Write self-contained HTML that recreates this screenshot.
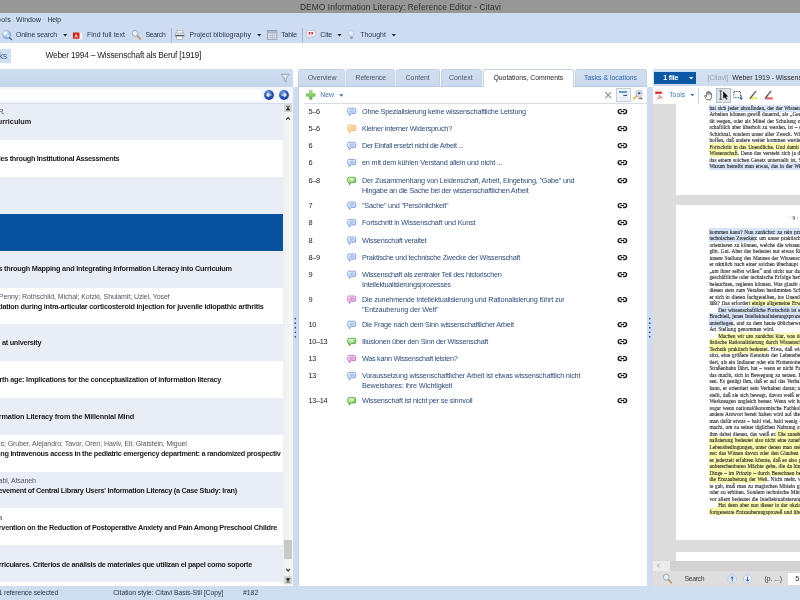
<!DOCTYPE html>
<html lang="en"><head><meta charset="utf-8">
<title>DEMO Information Literacy: Reference Editor - Citavi</title>
<style>
html,body{margin:0;padding:0;}
body{width:800px;height:600px;overflow:hidden;background:#fff;position:relative;font-family:"Liberation Sans",sans-serif;}
#app{position:absolute;left:0;top:0;width:800px;height:600px;overflow:hidden;will-change:transform;}
#app div,#app svg{position:absolute;box-sizing:border-box;}
.t{position:absolute;white-space:nowrap;line-height:1;transform:translateY(-50%);}
.f-s{font-family:"Liberation Sans",sans-serif;}
.f-r{font-family:"Liberation Serif",serif;}
.pd{-webkit-text-stroke:0.1px #262626;}
</style></head><body><div id="app">
<div style="left:0px;top:0px;width:800px;height:13.1px;background:#979797;"></div>
<span id="t0" class="t f-s" style="left:300px;top:6.6px;font-size:8.3px;color:#2f2f2f;letter-spacing:0.114px;">DEMO Information Literacy: Reference Editor - Citavi</span>
<div style="left:0px;top:13.1px;width:800px;height:30.3px;background:#cedcf1;"></div>
<span id="t1" class="t f-s" style="left:-3px;top:20.3px;font-size:6.9px;color:#1f2a3a;letter-spacing:0.336px;">ools</span>
<span id="t2" class="t f-s" style="left:16px;top:20.3px;font-size:6.9px;color:#1f2a3a;letter-spacing:0.081px;">Window</span>
<span id="t3" class="t f-s" style="left:47.5px;top:20.3px;font-size:6.9px;color:#1f2a3a;letter-spacing:-0.168px;">Help</span>
<div style="left:0px;top:43.3px;width:800px;height:25.7px;background:#ffffff;"></div>
<div style="left:-1px;top:48.6px;width:11.6px;height:14px;background:#d0dff3;"></div>
<span id="t4" class="t f-s" style="left:-1px;top:55.5px;font-size:8.3px;color:#4b6385;letter-spacing:-0.148px;">ks</span>
<span id="t5" class="t f-s" style="left:45.5px;top:55.2px;font-size:8.4px;color:#222;letter-spacing:-0.240px;">Weber 1994 – Wissenschaft als Beruf [1919]</span>
<div style="left:0px;top:69px;width:292.5px;height:17.7px;background:linear-gradient(#d1dff1,#c5d6ec);"></div>
<div style="left:0px;top:86.7px;width:292.5px;height:17px;background:#f3f6fb;"></div>
<div style="left:0px;top:89.5px;width:261px;height:11px;background:#ffffff;"></div>
<div style="left:0px;top:103.6px;width:283px;height:482.4px;background:#ffffff;"></div>
<div style="left:0px;top:103.6px;width:283px;height:36.8px;background:#e9eef6;"></div>
<div style="left:0px;top:177.2px;width:283px;height:36.8px;background:#e9eef6;"></div>
<div style="left:0px;top:214.0px;width:283px;height:36.8px;background:#07529f;"></div>
<div style="left:0px;top:250.79999999999998px;width:283px;height:36.8px;background:#e9eef6;"></div>
<div style="left:0px;top:324.4px;width:283px;height:36.8px;background:#e9eef6;"></div>
<div style="left:0px;top:398.0px;width:283px;height:36.8px;background:#e9eef6;"></div>
<div style="left:0px;top:471.6px;width:283px;height:36.8px;background:#e9eef6;"></div>
<div style="left:0px;top:545.1999999999999px;width:283px;height:36.8px;background:#e9eef6;"></div>
<div style="left:283px;top:103.6px;width:10px;height:482.4px;background:linear-gradient(90deg,#efefef,#f8f8f8);"></div>
<div style="left:293px;top:87px;width:5px;height:499px;background:#cedbf1;"></div>
<div style="left:298px;top:86px;width:349px;height:500px;background:#ffffff;border-left:1px solid #c3d0e3;"></div>
<div style="left:647px;top:87px;width:6px;height:499px;background:#cedbf1;"></div>
<div style="left:652.5px;top:69px;width:147.5px;height:16.8px;background:linear-gradient(#d3e1f2,#cddcf0);"></div>
<div style="left:652.5px;top:86px;width:147.5px;height:17.5px;background:#ffffff;"></div>
<div style="left:652.5px;top:103.5px;width:147.5px;height:468px;background:#dcdcdc;"></div>
<div style="left:675.8px;top:103.5px;width:125px;height:91.3px;background:#ffffff;"></div>
<div style="left:675.8px;top:205px;width:125px;height:335px;background:#ffffff;"></div>
<div style="left:675.8px;top:551.6px;width:125px;height:9.6px;background:#ffffff;"></div>
<div style="left:652.5px;top:561.2px;width:147.5px;height:10px;background:#d2d2d2;"></div>
<div style="left:652.5px;top:561.2px;width:17.5px;height:10px;background:#ececec;"></div>
<div style="left:653px;top:571px;width:147px;height:15px;background:#dedede;"></div>
<div style="left:0px;top:586px;width:800px;height:14.5px;background:#cfddf0;"></div>
<svg style="left:1px;top:29px;width:12px;height:12px" viewBox="0 0 12 12"><g transform="translate(0.8 0.8)"><defs><radialGradient id="gg" cx="0.35" cy="0.3" r="0.85"><stop offset="0" stop-color="#f2f8ff"/><stop offset="0.55" stop-color="#9dbfea"/><stop offset="1" stop-color="#4f7fc4"/></radialGradient></defs><circle cx="4.8" cy="4.8" r="4.2" fill="url(#gg)" stroke="#7d9fd2" stroke-width="0.4"/><path d="M2 3q1.5-1.6 3-0.8q0.6 1-0.6 1.8q-0.4 1.4-1.6 1.2q-1.2-0.8-0.8-2.2zM5.4 5.2q1.4-0.6 2.4 0.4q-0.2 1.6-1.6 2q-1-0.8-0.8-2.4z" fill="#ffffff" opacity="0.9"/><path d="M7.6 7.8L9.6 9.8" stroke="#4a5870" stroke-width="1.3" stroke-linecap="round"/></g></svg>
<span id="t6" class="t f-s" style="left:16px;top:35.2px;font-size:6.9px;color:#27364d;letter-spacing:-0.117px;">Online search</span>
<svg style="left:63px;top:34px;width:5px;height:3px" viewBox="0 0 5 3"><g transform="translate(0.1 0.1)"><path d="M0 0H4.2L2.1 2.4Z" fill="#1f2a3a"/></g></svg>
<svg style="left:72px;top:30px;width:11px;height:10px" viewBox="0 0 11 10"><g transform="translate(0.4 0)"><path d="M4.6 2.4H10V9.6H4.6Z" fill="#fbfbfb" stroke="#d0d0d0" stroke-width="0.4"/><rect x="0.5" y="2.6" width="6.6" height="6.2" rx="0.5" fill="#d9231d"/><path d="M2.5 7.6L3.8 4.4L5.1 7.6M3 6.5H4.6" stroke="#fff" stroke-width="0.7" fill="none"/></g></svg>
<span id="t7" class="t f-s" style="left:87px;top:35.2px;font-size:6.9px;color:#27364d;letter-spacing:0.060px;">Find full text</span>
<svg style="left:131px;top:29px;width:11px;height:12px" viewBox="0 0 11 12"><g transform="translate(0.5 0.8)"><circle cx="3.6" cy="3.6" r="2.9" fill="#eaf3fb" stroke="#8fa3bd" stroke-width="0.9"/><path d="M5.8 5.9L8.8 9.2" stroke="#c98a4a" stroke-width="1.5" stroke-linecap="round"/></g></svg>
<span id="t8" class="t f-s" style="left:145.5px;top:35.2px;font-size:6.9px;color:#27364d;letter-spacing:-0.307px;">Search</span>
<div style="left:171.2px;top:27.5px;width:0.8px;height:15px;background:#a9b9d0;"></div>
<svg style="left:174px;top:29px;width:11px;height:12px" viewBox="0 0 11 12"><g transform="translate(0.8 0.8)"><rect x="2.2" y="0.6" width="5.4" height="3" fill="#fff" stroke="#8b8f96" stroke-width="0.5"/><rect x="0.5" y="3.2" width="8.8" height="4.2" rx="0.8" fill="#dfe2e7" stroke="#80858d" stroke-width="0.5"/><rect x="0.9" y="5.2" width="8" height="1.2" fill="#4a4d52"/><rect x="2" y="6.4" width="5.8" height="3.2" fill="#fff" stroke="#8b8f96" stroke-width="0.5"/></g></svg>
<span id="t9" class="t f-s" style="left:189.5px;top:35.2px;font-size:6.9px;color:#27364d;letter-spacing:0.048px;">Project bibliography</span>
<svg style="left:257px;top:34px;width:5px;height:3px" viewBox="0 0 5 3"><g transform="translate(0.1 0.1)"><path d="M0 0H4.2L2.1 2.4Z" fill="#1f2a3a"/></g></svg>
<svg style="left:267px;top:30px;width:11px;height:10px" viewBox="0 0 11 10"><g transform="translate(0 0.2)"><rect x="0.4" y="0.4" width="9.4" height="8.6" fill="#fbfcfe" stroke="#7d8ca3" stroke-width="0.8"/><rect x="0.8" y="0.8" width="8.6" height="2" fill="#aebfd8"/><path d="M0.8 3H9.4M0.8 5H9.4M0.8 7H9.4M3.2 3V8.8M5.2 3V8.8M7.2 3V8.8" stroke="#8d9bb0" stroke-width="0.55"/></g></svg>
<span id="t10" class="t f-s" style="left:281.3px;top:35.2px;font-size:6.9px;color:#27364d;letter-spacing:-0.157px;">Table</span>
<div style="left:302.3px;top:27.5px;width:0.8px;height:15px;background:#a9b9d0;"></div>
<svg style="left:306px;top:30px;width:10px;height:10px" viewBox="0 0 10 10"><path d="M1.6 0.6H8Q9.2 0.6 9.2 1.8V5.4Q9.2 6.6 8 6.6H4.6L2.4 8.8V6.6H1.6Q0.5 6.6 0.5 5.4V1.8Q0.5 0.6 1.6 0.6Z" fill="#fdfdfd" stroke="#b0a3ab" stroke-width="0.6"/><path d="M2.7 1.9h1.7v1.8l-0.9 1.5h-0.8l0.7-1.5h-0.7zM5.3 1.9h1.7v1.8l-0.9 1.5h-0.8l0.7-1.5h-0.7z" fill="#cf2a30"/></svg>
<span id="t11" class="t f-s" style="left:320.3px;top:35.2px;font-size:6.9px;color:#27364d;letter-spacing:-0.141px;">Cite</span>
<svg style="left:337px;top:34px;width:5px;height:3px" viewBox="0 0 5 3"><g transform="translate(0.4 0.1)"><path d="M0 0H4.2L2.1 2.4Z" fill="#1f2a3a"/></g></svg>
<svg style="left:348px;top:30px;width:7px;height:11px" viewBox="0 0 7 11"><g transform="translate(0 0.2)"><defs><radialGradient id="bg" cx="0.4" cy="0.35" r="0.7"><stop offset="0" stop-color="#ffffff"/><stop offset="1" stop-color="#bccde6"/></radialGradient></defs><path d="M3.3 0.5C5.2 0.5 6.2 1.8 6.2 3.2C6.2 4.6 5 5.2 4.7 6.4H1.9C1.6 5.2 0.4 4.6 0.4 3.2C0.4 1.8 1.4 0.5 3.3 0.5Z" fill="url(#bg)" stroke="#a3b4ce" stroke-width="0.5"/><rect x="2.1" y="6.6" width="2.4" height="2" rx="0.5" fill="#8794ab"/></g></svg>
<span id="t12" class="t f-s" style="left:360.2px;top:35.2px;font-size:6.9px;color:#27364d;letter-spacing:0.072px;">Thought</span>
<svg style="left:391px;top:34px;width:5px;height:3px" viewBox="0 0 5 3"><g transform="translate(0.7 0.1)"><path d="M0 0H4.2L2.1 2.4Z" fill="#1f2a3a"/></g></svg>
<svg style="left:280px;top:73px;width:10px;height:11px" viewBox="0 0 10 11"><g transform="translate(0.5 0.5)"><path d="M0.8 0.9H8.6L5.6 4.6V8.4L3.9 7.4V4.6Z" fill="#f7f9fc" stroke="#6f7f95" stroke-width="0.7" stroke-linejoin="round"/></g></svg>
<svg style="left:263px;top:89px;width:12px;height:12px" viewBox="0 0 12 12"><g transform="translate(0.8 0.8)"><defs><radialGradient id="nb" cx="0.4" cy="0.3" r="0.75"><stop offset="0" stop-color="#7fa6ea"/><stop offset="0.55" stop-color="#2a56c0"/><stop offset="1" stop-color="#153a8e"/></radialGradient></defs><circle cx="5.2" cy="5.2" r="4.9" fill="url(#nb)"/><path d="M7.6 5.2H3.4M5 3.4L3.2 5.2L5 7" stroke="#fff" stroke-width="1.2" fill="none"/></g></svg>
<svg style="left:278px;top:89px;width:12px;height:12px" viewBox="0 0 12 12"><g transform="translate(0.8 0.8)"><defs><radialGradient id="nb2" cx="0.4" cy="0.3" r="0.75"><stop offset="0" stop-color="#7fa6ea"/><stop offset="0.55" stop-color="#2a56c0"/><stop offset="1" stop-color="#153a8e"/></radialGradient></defs><circle cx="5.2" cy="5.2" r="4.9" fill="url(#nb2)"/><path d="M2.8 5.2H7M5.4 3.4L7.2 5.2L5.4 7" stroke="#fff" stroke-width="1.2" fill="none"/></g></svg>
<div style="left:0px;top:103.2px;width:292.5px;height:0.5px;background:#d5dbe6;"></div>
<div style="left:284px;top:104.2px;width:8px;height:8.3px;background:#d4d4d4;"></div>
<svg style="left:285px;top:106px;width:6px;height:5px" viewBox="0 0 6 5"><g transform="translate(0.8 0)"><path d="M0.3 0.5H4.1M2.2 1.4L3.9 4H0.5Z" stroke="#222" stroke-width="0.7" fill="#222"/></g></svg>
<svg style="left:285px;top:116px;width:6px;height:5px" viewBox="0 0 6 5"><g transform="translate(0.6 0.6)"><path d="M0.6 3L2.5 1L4.4 3" stroke="#333" stroke-width="1.1" fill="none"/></g></svg>
<div style="left:284px;top:540px;width:8px;height:19px;background:#c8c8c8;"></div>
<svg style="left:285px;top:568px;width:6px;height:5px" viewBox="0 0 6 5"><g transform="translate(0.6 0.2)"><path d="M0.6 0.8L2.5 2.8L4.4 0.8" stroke="#333" stroke-width="1.1" fill="none"/></g></svg>
<div style="left:284px;top:576px;width:8px;height:8.3px;background:#d4d4d4;"></div>
<svg style="left:285px;top:577px;width:6px;height:6px" viewBox="0 0 6 6"><g transform="translate(0.8 0.6)"><path d="M0.3 4.5H4.1M2.2 3.6L3.9 1H0.5Z" stroke="#222" stroke-width="0.7" fill="#222"/></g></svg>
<svg style="left:294px;top:317px;width:3px;height:3px" viewBox="0 0 3 3"><g transform="translate(0.3 0.6)"><circle cx="1" cy="1" r="0.85" fill="#1f55a8"/></g></svg>
<svg style="left:294px;top:322px;width:3px;height:3px" viewBox="0 0 3 3"><g transform="translate(0.3 0.15)"><circle cx="1" cy="1" r="0.85" fill="#1f55a8"/></g></svg>
<svg style="left:294px;top:326px;width:3px;height:3px" viewBox="0 0 3 3"><g transform="translate(0.3 0.7)"><circle cx="1" cy="1" r="0.85" fill="#1f55a8"/></g></svg>
<svg style="left:294px;top:331px;width:3px;height:3px" viewBox="0 0 3 3"><g transform="translate(0.3 0.25)"><circle cx="1" cy="1" r="0.85" fill="#1f55a8"/></g></svg>
<svg style="left:294px;top:335px;width:3px;height:3px" viewBox="0 0 3 3"><g transform="translate(0.3 0.8)"><circle cx="1" cy="1" r="0.85" fill="#1f55a8"/></g></svg>
<svg style="left:648px;top:317px;width:3px;height:3px" viewBox="0 0 3 3"><g transform="translate(0.7 0.6)"><circle cx="1" cy="1" r="0.85" fill="#1f55a8"/></g></svg>
<svg style="left:648px;top:322px;width:3px;height:3px" viewBox="0 0 3 3"><g transform="translate(0.7 0.15)"><circle cx="1" cy="1" r="0.85" fill="#1f55a8"/></g></svg>
<svg style="left:648px;top:326px;width:3px;height:3px" viewBox="0 0 3 3"><g transform="translate(0.7 0.7)"><circle cx="1" cy="1" r="0.85" fill="#1f55a8"/></g></svg>
<svg style="left:648px;top:331px;width:3px;height:3px" viewBox="0 0 3 3"><g transform="translate(0.7 0.25)"><circle cx="1" cy="1" r="0.85" fill="#1f55a8"/></g></svg>
<svg style="left:648px;top:335px;width:3px;height:3px" viewBox="0 0 3 3"><g transform="translate(0.7 0.8)"><circle cx="1" cy="1" r="0.85" fill="#1f55a8"/></g></svg>
<div style="left:298px;top:69px;width:47px;height:17px;background:linear-gradient(#d2dff0,#cad9ed);border:1px solid #c2d0e4;border-bottom:none;border-radius:3px 3px 0 0;"></div>
<span id="t13" class="t f-s" style="left:308px;top:77.6px;font-size:6.9px;color:#4a5568;letter-spacing:-0.052px;">Overview</span>
<div style="left:346px;top:69px;width:49px;height:17px;background:linear-gradient(#d2dff0,#cad9ed);border:1px solid #c2d0e4;border-bottom:none;border-radius:3px 3px 0 0;"></div>
<span id="t14" class="t f-s" style="left:355.6px;top:77.6px;font-size:6.9px;color:#4a5568;letter-spacing:-0.177px;">Reference</span>
<div style="left:396px;top:69px;width:44px;height:17px;background:linear-gradient(#d2dff0,#cad9ed);border:1px solid #c2d0e4;border-bottom:none;border-radius:3px 3px 0 0;"></div>
<span id="t15" class="t f-s" style="left:405.6px;top:77.6px;font-size:6.9px;color:#4a5568;letter-spacing:0.008px;">Content</span>
<div style="left:441px;top:69px;width:41px;height:17px;background:linear-gradient(#d2dff0,#cad9ed);border:1px solid #c2d0e4;border-bottom:none;border-radius:3px 3px 0 0;"></div>
<span id="t16" class="t f-s" style="left:449px;top:77.6px;font-size:6.9px;color:#4a5568;letter-spacing:-0.021px;">Context</span>
<div style="left:483px;top:69px;width:91px;height:18px;background:#ffffff;border:1px solid #c2d0e4;border-bottom:none;border-radius:3px 3px 0 0;"></div>
<span id="t17" class="t f-s" style="left:493.5px;top:77.6px;font-size:6.9px;color:#1f1f1f;letter-spacing:-0.038px;">Quotations, Comments</span>
<div style="left:575px;top:69px;width:72px;height:17px;background:linear-gradient(#d2dff0,#cad9ed);border:1px solid #c2d0e4;border-bottom:none;border-radius:3px 3px 0 0;"></div>
<span id="t18" class="t f-s" style="left:584px;top:77.6px;font-size:6.9px;color:#2c68ae;letter-spacing:-0.014px;">Tasks &amp; locations</span>
<div style="left:298.5px;top:85.8px;width:184px;height:0.6px;background:#b9c9df;"></div>
<div style="left:573.5px;top:85.8px;width:73.3px;height:0.6px;background:#b9c9df;"></div>
<svg style="left:305px;top:90px;width:12px;height:11px" viewBox="0 0 12 11"><g transform="translate(0.9 0.1)"><defs><linearGradient id="gp" x1="0" y1="0" x2="0" y2="1"><stop offset="0" stop-color="#c2efa0"/><stop offset="1" stop-color="#58b43a"/></linearGradient></defs><path d="M3.6 0.6H6.2V3.6H9.2V6.2H6.2V9.2H3.6V6.2H0.6V3.6H3.6Z" fill="url(#gp)" stroke="#5fae46" stroke-width="0.6" stroke-linejoin="round"/></g></svg>
<span id="t19" class="t f-s" style="left:320.3px;top:95.2px;font-size:6.9px;color:#4373ae;letter-spacing:-0.032px;">New</span>
<svg style="left:339px;top:94px;width:5px;height:3px" viewBox="0 0 5 3"><g transform="translate(0.2 0.3)"><path d="M0 0H4.2L2.1 2.4Z" fill="#3a6aa8"/></g></svg>
<div style="left:304px;top:103px;width:343px;height:0.6px;background:#d9dde3;"></div>
<svg style="left:604px;top:91px;width:8px;height:8px" viewBox="0 0 8 8"><g transform="translate(0.5 0.5)"><path d="M0.7 0.7L6.7 6.7M6.7 0.7L0.7 6.7" stroke="#8c8c8c" stroke-width="1.05"/></g></svg>
<div style="left:615.6px;top:88px;width:15px;height:14.4px;background:#eff3f8;border:0.6px solid #c6ced9;"></div>
<svg style="left:618px;top:90px;width:10px;height:10px" viewBox="0 0 10 10"><g transform="translate(0.6 0.6)"><rect x="0.4" y="0.5" width="8.2" height="1.7" fill="#3f96bc"/><rect x="4.8" y="4.2" width="3.8" height="1.2" fill="#44607f"/><rect x="1" y="6.8" width="7.4" height="0.6" fill="#d3dbe6"/></g></svg>
<svg style="left:632px;top:89px;width:12px;height:12px" viewBox="0 0 12 12"><g transform="translate(0.8 0.6)"><circle cx="6.4" cy="3.9" r="3.2" fill="#e6effa" stroke="#9aa8bd" stroke-width="0.7"/><circle cx="6.4" cy="3.7" r="1.3" fill="#3f5fa6"/><path d="M4 6.2L1 9.2" stroke="#e0a93a" stroke-width="1.6" stroke-linecap="round"/><path d="M5.4 8.8H9.2M8 7.8L9.4 8.8L8 9.8" stroke="#333" stroke-width="0.7" fill="none"/></g></svg>
<div style="left:653.6px;top:72px;width:42.6px;height:12px;background:#0b58a6;"></div>
<span id="t20" class="t f-s" style="left:663.3px;top:78.1px;font-size:7.2px;color:#ffffff;font-weight:700;letter-spacing:-0.232px;">1 file</span>
<svg style="left:689px;top:77px;width:5px;height:3px" viewBox="0 0 5 3"><g transform="translate(0.1 0.0)"><path d="M0 0H4.2L2.1 2.4Z" fill="#ffffff"/></g></svg>
<span id="t21" class="t f-s" style="left:707.6px;top:78px;font-size:6.9px;color:#9aa3ad;letter-spacing:-0.058px;">[Citavi]</span>
<span id="t22" class="t f-s" style="left:732.3px;top:78px;font-size:6.9px;color:#1f1f1f;">Weber 1919 - Wissenschaft als Beruf</span>
<svg style="left:655px;top:90px;width:9px;height:10px" viewBox="0 0 9 10"><path d="M1.4 0.5H6L8 2.5V9.5H1.4Z" fill="#fff" stroke="#cfcfcf" stroke-width="0.45"/><rect x="0.2" y="1.7" width="6.6" height="2.1" fill="#d8261f"/><path d="M3 8.6Q4.3 6.6 4.5 5.2Q4.7 4.6 4.4 5.6Q5.2 7.2 7 7.5Q4.8 7.4 3 8.6Z" stroke="#d8261f" stroke-width="0.55" fill="none"/></svg>
<span id="t23" class="t f-s" style="left:669.2px;top:95.2px;font-size:6.9px;color:#4276b8;letter-spacing:-0.019px;">Tools</span>
<svg style="left:690px;top:94px;width:5px;height:3px" viewBox="0 0 5 3"><g transform="translate(0.5 0.1)"><path d="M0 0H3.8L1.9 2.2Z" fill="#2f62a6"/></g></svg>
<div style="left:698.3px;top:88px;width:0.7px;height:14.5px;background:#c9d2de;"></div>
<svg style="left:703px;top:90px;width:11px;height:11px" viewBox="0 0 11 11"><g transform="translate(0.8 0.2)"><path d="M3.2 9.6C2.3 8.5 1.3 6.9 0.8 6C0.5 5.3 1.3 4.9 1.9 5.5L2.8 6.5V2.6C2.8 1.8 3.95 1.8 3.95 2.6V1.7C3.95 0.9 5.15 0.9 5.15 1.7V2.1C5.15 1.3 6.35 1.3 6.35 2.1V3.1C6.35 2.3 7.55 2.3 7.55 3.1V6.6C7.55 8 7.1 9.6 6.4 9.6Z" fill="#fff" stroke="#2a2a2a" stroke-width="0.65" stroke-linejoin="round"/><path d="M3.95 2.6V4.7M5.15 2.1V4.7M6.35 3.1V4.9" stroke="#2a2a2a" stroke-width="0.55"/></g></svg>
<div style="left:716px;top:87.6px;width:15px;height:15.4px;background:#dfe4ea;border:0.6px solid #b5bfcc;"></div>
<svg style="left:718px;top:90px;width:11px;height:11px" viewBox="0 0 11 11"><g transform="translate(0.8 0)"><path d="M0.6 0.9H3.2M1.9 0.9V9.3M0.6 9.3H3.2" stroke="#1f1f1f" stroke-width="0.75" fill="none"/><path d="M4.4 1.2V8.8L6.2 7.2L7.4 9.8L8.5 9.3L7.3 6.8L9.4 6.6Z" fill="#111"/></g></svg>
<svg style="left:733px;top:90px;width:11px;height:11px" viewBox="0 0 11 11"><g transform="translate(0.2 0.8)"><rect x="0.7" y="0.7" width="6.6" height="6.2" fill="none" stroke="#2a2a2a" stroke-width="0.9" stroke-dasharray="1.3 1.1"/><path d="M8 4.6V8.4M6.6 7L8 8.8L9.4 7" stroke="#2a62c0" stroke-width="1" fill="none"/></g></svg>
<svg style="left:748px;top:90px;width:11px;height:10px" viewBox="0 0 11 10"><g transform="translate(0.8 0)"><path d="M0.3 9.6H8.8V7.4L4.6 6.8Z" fill="#e6f07a"/><path d="M1.4 8.2L6.9 1.5" stroke="#5a5a50" stroke-width="1.35" stroke-linecap="round"/><path d="M4.6 4.3L6.9 1.5" stroke="#8a8a80" stroke-width="1.35" stroke-linecap="round"/></g></svg>
<svg style="left:763px;top:90px;width:11px;height:10px" viewBox="0 0 11 10"><g transform="translate(0.8 0)"><path d="M1.4 9.6H9V7.2H3.6Z" fill="#ea5f6c"/><path d="M1.4 8.2L6.9 1.5" stroke="#5a5050" stroke-width="1.35" stroke-linecap="round"/><path d="M4.6 4.3L6.9 1.5" stroke="#8a8080" stroke-width="1.35" stroke-linecap="round"/></g></svg>
<span id="t24" class="t f-s" style="left:656.6px;top:566.2px;font-size:6.6px;color:#9a9a9a;">&lt;</span>
<svg style="left:662px;top:573px;width:11px;height:12px" viewBox="0 0 11 12"><g transform="translate(0.6 0.6)"><circle cx="3.6" cy="3.6" r="2.9" fill="#eaf3fb" stroke="#8fa3bd" stroke-width="0.9"/><path d="M5.8 5.9L8.8 9.2" stroke="#b7925e" stroke-width="1.5" stroke-linecap="round"/></g></svg>
<span id="t25" class="t f-s" style="left:684.4px;top:579px;font-size:6.9px;color:#3a3a3a;letter-spacing:-0.341px;">Search</span>
<svg style="left:727px;top:574px;width:10px;height:10px" viewBox="0 0 10 10"><g transform="translate(0.6 0.4)"><circle cx="4.6" cy="4.6" r="4.2" fill="#eaf2fc" stroke="#8eb3e4" stroke-width="0.6"/><path d="M4.6 7V2.4M2.9 4.1L4.6 2.3L6.3 4.1" stroke="#1c55b0" stroke-width="0.9" fill="none"/></g></svg>
<svg style="left:743px;top:574px;width:10px;height:10px" viewBox="0 0 10 10"><g transform="translate(0 0.4)"><circle cx="4.6" cy="4.6" r="4.2" fill="#eaf2fc" stroke="#8eb3e4" stroke-width="0.6"/><path d="M4.6 2.2V6.8M2.9 5.1L4.6 6.9L6.3 5.1" stroke="#1c55b0" stroke-width="0.9" fill="none"/></g></svg>
<span id="t26" class="t f-s" style="left:764.4px;top:579px;font-size:6.9px;color:#3a3a3a;letter-spacing:-0.050px;">(p. ...)</span>
<div style="left:788px;top:573px;width:14px;height:12px;background:#ffffff;"></div>
<span id="t27" class="t f-s" style="left:795.2px;top:579.2px;font-size:7.2px;color:#222;">5</span>
<span id="t28" class="t f-s" style="left:-1.5px;top:593.2px;font-size:6.9px;color:#27364d;letter-spacing:-0.137px;">1 reference selected</span>
<span id="t29" class="t f-s" style="left:113.2px;top:593.2px;font-size:6.9px;color:#27364d;letter-spacing:-0.074px;">Citation style: Citavi Basis-Stil [Copy]</span>
<span id="t30" class="t f-s" style="left:243px;top:593.2px;font-size:6.9px;color:#27364d;letter-spacing:-0.036px;">#182</span>
<span id="t31" class="t f-s" style="left:308.4px;top:111.8px;font-size:7.4px;color:#222222;letter-spacing:-0.315px;">5–6</span>
<svg style="left:347px;top:107px;width:10px;height:10px" viewBox="0 0 10 10"><g transform="translate(0.2 0.7)"><defs><linearGradient id="bu1" x1="0.2" y1="0" x2="0.8" y2="1"><stop offset="0.15" stop-color="#f4f8ff"/><stop offset="1" stop-color="#a9c3f0"/></linearGradient></defs><path d="M1.7 0.5H7.3Q8.5 0.5 8.5 1.7V4.6Q8.5 5.8 7.3 5.8H4.2L2 8V5.8H1.7Q0.5 5.8 0.5 4.6V1.7Q0.5 0.5 1.7 0.5Z" fill="url(#bu1)" stroke="#5c85d2" stroke-width="0.7" stroke-linejoin="round"/><path d="M2.4 2.2H6.6M2.4 3.2H6.6M2.4 4.2H5" stroke="#4f7bd0" stroke-width="0.5" opacity="0.8"/></g></svg>
<span id="t32" class="t f-s" style="left:362px;top:111.8px;font-size:7.3px;color:#2f4d7e;letter-spacing:-0.254px;">Ohne Spezialisierung keine wissenschaftliche Leistung</span>
<svg style="left:617px;top:108px;width:11px;height:7px" viewBox="0 0 11 7"><g transform="translate(0.4 0.5)"><path d="M4.3 1.05H2.75A1.95 1.95 0 0 0 2.75 4.95H4.3M5.7 1.05H7.25A1.95 1.95 0 0 1 7.25 4.95H5.7" stroke="#1c1c1c" stroke-width="1.35" fill="none"/><path d="M3.3 3H6.7" stroke="#1c1c1c" stroke-width="1.25"/></g></svg>
<span id="t33" class="t f-s" style="left:308.4px;top:128.8px;font-size:7.4px;color:#222222;letter-spacing:-0.315px;">5–6</span>
<svg style="left:347px;top:124px;width:10px;height:10px" viewBox="0 0 10 10"><g transform="translate(0.2 0.7)"><defs><linearGradient id="bu2" x1="0.2" y1="0" x2="0.8" y2="1"><stop offset="0.15" stop-color="#fff3de"/><stop offset="1" stop-color="#fbc672"/></linearGradient></defs><path d="M1.7 0.5H7.3Q8.5 0.5 8.5 1.7V4.6Q8.5 5.8 7.3 5.8H4.2L2 8V5.8H1.7Q0.5 5.8 0.5 4.6V1.7Q0.5 0.5 1.7 0.5Z" fill="url(#bu2)" stroke="#e9a040" stroke-width="0.7" stroke-linejoin="round"/><path d="M2.4 2.2H6.6M2.4 3.2H6.6M2.4 4.2H5" stroke="#e3962e" stroke-width="0.5" opacity="0.8"/></g></svg>
<span id="t34" class="t f-s" style="left:362px;top:128.8px;font-size:7.3px;color:#2f4d7e;letter-spacing:-0.225px;">Kleiner interner Widerspruch?</span>
<svg style="left:617px;top:125px;width:11px;height:7px" viewBox="0 0 11 7"><g transform="translate(0.4 0.5)"><path d="M4.3 1.05H2.75A1.95 1.95 0 0 0 2.75 4.95H4.3M5.7 1.05H7.25A1.95 1.95 0 0 1 7.25 4.95H5.7" stroke="#1c1c1c" stroke-width="1.35" fill="none"/><path d="M3.3 3H6.7" stroke="#1c1c1c" stroke-width="1.25"/></g></svg>
<span id="t35" class="t f-s" style="left:308.4px;top:145.9px;font-size:7.4px;color:#222222;letter-spacing:-0.125px;">6</span>
<svg style="left:347px;top:141px;width:10px;height:10px" viewBox="0 0 10 10"><g transform="translate(0.2 0.8)"><defs><linearGradient id="bu3" x1="0.2" y1="0" x2="0.8" y2="1"><stop offset="0.15" stop-color="#f4f8ff"/><stop offset="1" stop-color="#a9c3f0"/></linearGradient></defs><path d="M1.7 0.5H7.3Q8.5 0.5 8.5 1.7V4.6Q8.5 5.8 7.3 5.8H4.2L2 8V5.8H1.7Q0.5 5.8 0.5 4.6V1.7Q0.5 0.5 1.7 0.5Z" fill="url(#bu3)" stroke="#5c85d2" stroke-width="0.7" stroke-linejoin="round"/><path d="M2.4 2.2H6.6M2.4 3.2H6.6M2.4 4.2H5" stroke="#4f7bd0" stroke-width="0.5" opacity="0.8"/></g></svg>
<span id="t36" class="t f-s" style="left:362px;top:145.9px;font-size:7.3px;color:#2f4d7e;letter-spacing:-0.357px;">Der Einfall ersetzt nicht die Arbeit ...</span>
<svg style="left:617px;top:142px;width:11px;height:7px" viewBox="0 0 11 7"><g transform="translate(0.4 0.5)"><path d="M4.3 1.05H2.75A1.95 1.95 0 0 0 2.75 4.95H4.3M5.7 1.05H7.25A1.95 1.95 0 0 1 7.25 4.95H5.7" stroke="#1c1c1c" stroke-width="1.35" fill="none"/><path d="M3.3 3H6.7" stroke="#1c1c1c" stroke-width="1.25"/></g></svg>
<span id="t37" class="t f-s" style="left:308.4px;top:163.0px;font-size:7.4px;color:#222222;letter-spacing:-0.125px;">6</span>
<svg style="left:347px;top:158px;width:10px;height:10px" viewBox="0 0 10 10"><g transform="translate(0.2 0.9)"><defs><linearGradient id="bu4" x1="0.2" y1="0" x2="0.8" y2="1"><stop offset="0.15" stop-color="#f4f8ff"/><stop offset="1" stop-color="#a9c3f0"/></linearGradient></defs><path d="M1.7 0.5H7.3Q8.5 0.5 8.5 1.7V4.6Q8.5 5.8 7.3 5.8H4.2L2 8V5.8H1.7Q0.5 5.8 0.5 4.6V1.7Q0.5 0.5 1.7 0.5Z" fill="url(#bu4)" stroke="#5c85d2" stroke-width="0.7" stroke-linejoin="round"/><path d="M2.4 2.2H6.6M2.4 3.2H6.6M2.4 4.2H5" stroke="#4f7bd0" stroke-width="0.5" opacity="0.8"/></g></svg>
<span id="t38" class="t f-s" style="left:362px;top:163.0px;font-size:7.3px;color:#2f4d7e;letter-spacing:-0.189px;">en mit dem kühlen Verstand allein und nicht ...</span>
<svg style="left:617px;top:159px;width:11px;height:7px" viewBox="0 0 11 7"><g transform="translate(0.4 0.5)"><path d="M4.3 1.05H2.75A1.95 1.95 0 0 0 2.75 4.95H4.3M5.7 1.05H7.25A1.95 1.95 0 0 1 7.25 4.95H5.7" stroke="#1c1c1c" stroke-width="1.35" fill="none"/><path d="M3.3 3H6.7" stroke="#1c1c1c" stroke-width="1.25"/></g></svg>
<span id="t39" class="t f-s" style="left:308.4px;top:180.9px;font-size:7.4px;color:#222222;letter-spacing:-0.315px;">6–8</span>
<svg style="left:347px;top:176px;width:10px;height:10px" viewBox="0 0 10 10"><g transform="translate(0.2 0.8)"><defs><linearGradient id="bu5" x1="0.2" y1="0" x2="0.8" y2="1"><stop offset="0.15" stop-color="#d2f4b2"/><stop offset="1" stop-color="#5aba3a"/></linearGradient></defs><path d="M1.7 0.5H7.3Q8.5 0.5 8.5 1.7V4.6Q8.5 5.8 7.3 5.8H4.2L2 8V5.8H1.7Q0.5 5.8 0.5 4.6V1.7Q0.5 0.5 1.7 0.5Z" fill="url(#bu5)" stroke="#2f8f22" stroke-width="0.7" stroke-linejoin="round"/><path d="M3.1 2.2Q4.6 1 5.6 2.1Q6 3 4.6 3.4V4M4.6 4.6V5" stroke="#ffffff" stroke-width="0.85" fill="none"/></g></svg>
<span id="t40" class="t f-s" style="left:362px;top:180.9px;font-size:7.3px;color:#2f4d7e;letter-spacing:-0.223px;">Der Zusammenhang von Leidenschaft, Arbeit, Eingebung, "Gabe" und</span>
<span id="t41" class="t f-s" style="left:362px;top:190.8px;font-size:7.3px;color:#2f4d7e;letter-spacing:-0.245px;">Hingabe an die Sache bei der wissenschaftlichen Arbeit</span>
<svg style="left:617px;top:177px;width:11px;height:7px" viewBox="0 0 11 7"><g transform="translate(0.4 0.5)"><path d="M4.3 1.05H2.75A1.95 1.95 0 0 0 2.75 4.95H4.3M5.7 1.05H7.25A1.95 1.95 0 0 1 7.25 4.95H5.7" stroke="#1c1c1c" stroke-width="1.35" fill="none"/><path d="M3.3 3H6.7" stroke="#1c1c1c" stroke-width="1.25"/></g></svg>
<span id="t42" class="t f-s" style="left:308.4px;top:205.7px;font-size:7.4px;color:#222222;letter-spacing:-0.325px;">7</span>
<svg style="left:347px;top:201px;width:10px;height:10px" viewBox="0 0 10 10"><g transform="translate(0.2 0.6)"><defs><linearGradient id="bu6" x1="0.2" y1="0" x2="0.8" y2="1"><stop offset="0.15" stop-color="#f4f8ff"/><stop offset="1" stop-color="#a9c3f0"/></linearGradient></defs><path d="M1.7 0.5H7.3Q8.5 0.5 8.5 1.7V4.6Q8.5 5.8 7.3 5.8H4.2L2 8V5.8H1.7Q0.5 5.8 0.5 4.6V1.7Q0.5 0.5 1.7 0.5Z" fill="url(#bu6)" stroke="#5c85d2" stroke-width="0.7" stroke-linejoin="round"/><path d="M2.4 2.2H6.6M2.4 3.2H6.6M2.4 4.2H5" stroke="#4f7bd0" stroke-width="0.5" opacity="0.8"/></g></svg>
<span id="t43" class="t f-s" style="left:362px;top:205.7px;font-size:7.3px;color:#2f4d7e;letter-spacing:-0.226px;">"Sache" und "Persönlichkeit"</span>
<svg style="left:617px;top:202px;width:11px;height:7px" viewBox="0 0 11 7"><g transform="translate(0.4 0.5)"><path d="M4.3 1.05H2.75A1.95 1.95 0 0 0 2.75 4.95H4.3M5.7 1.05H7.25A1.95 1.95 0 0 1 7.25 4.95H5.7" stroke="#1c1c1c" stroke-width="1.35" fill="none"/><path d="M3.3 3H6.7" stroke="#1c1c1c" stroke-width="1.25"/></g></svg>
<span id="t44" class="t f-s" style="left:308.4px;top:223.2px;font-size:7.4px;color:#222222;letter-spacing:-0.125px;">8</span>
<svg style="left:347px;top:219px;width:10px;height:9px" viewBox="0 0 10 9"><g transform="translate(0.2 0.1)"><defs><linearGradient id="bu7" x1="0.2" y1="0" x2="0.8" y2="1"><stop offset="0.15" stop-color="#f4f8ff"/><stop offset="1" stop-color="#a9c3f0"/></linearGradient></defs><path d="M1.7 0.5H7.3Q8.5 0.5 8.5 1.7V4.6Q8.5 5.8 7.3 5.8H4.2L2 8V5.8H1.7Q0.5 5.8 0.5 4.6V1.7Q0.5 0.5 1.7 0.5Z" fill="url(#bu7)" stroke="#5c85d2" stroke-width="0.7" stroke-linejoin="round"/><path d="M2.4 2.2H6.6M2.4 3.2H6.6M2.4 4.2H5" stroke="#4f7bd0" stroke-width="0.5" opacity="0.8"/></g></svg>
<span id="t45" class="t f-s" style="left:362px;top:223.2px;font-size:7.3px;color:#2f4d7e;letter-spacing:-0.191px;">Fortschritt in Wissenschaft und Kunst</span>
<svg style="left:617px;top:219px;width:11px;height:7px" viewBox="0 0 11 7"><g transform="translate(0.4 0.5)"><path d="M4.3 1.05H2.75A1.95 1.95 0 0 0 2.75 4.95H4.3M5.7 1.05H7.25A1.95 1.95 0 0 1 7.25 4.95H5.7" stroke="#1c1c1c" stroke-width="1.35" fill="none"/><path d="M3.3 3H6.7" stroke="#1c1c1c" stroke-width="1.25"/></g></svg>
<span id="t46" class="t f-s" style="left:308.4px;top:240.6px;font-size:7.4px;color:#222222;letter-spacing:-0.125px;">8</span>
<svg style="left:347px;top:236px;width:10px;height:10px" viewBox="0 0 10 10"><g transform="translate(0.2 0.5)"><defs><linearGradient id="bu8" x1="0.2" y1="0" x2="0.8" y2="1"><stop offset="0.15" stop-color="#f4f8ff"/><stop offset="1" stop-color="#a9c3f0"/></linearGradient></defs><path d="M1.7 0.5H7.3Q8.5 0.5 8.5 1.7V4.6Q8.5 5.8 7.3 5.8H4.2L2 8V5.8H1.7Q0.5 5.8 0.5 4.6V1.7Q0.5 0.5 1.7 0.5Z" fill="url(#bu8)" stroke="#5c85d2" stroke-width="0.7" stroke-linejoin="round"/><path d="M2.4 2.2H6.6M2.4 3.2H6.6M2.4 4.2H5" stroke="#4f7bd0" stroke-width="0.5" opacity="0.8"/></g></svg>
<span id="t47" class="t f-s" style="left:362px;top:240.6px;font-size:7.3px;color:#2f4d7e;letter-spacing:-0.236px;">Wissenschaft veraltet</span>
<svg style="left:617px;top:237px;width:11px;height:7px" viewBox="0 0 11 7"><g transform="translate(0.4 0.5)"><path d="M4.3 1.05H2.75A1.95 1.95 0 0 0 2.75 4.95H4.3M5.7 1.05H7.25A1.95 1.95 0 0 1 7.25 4.95H5.7" stroke="#1c1c1c" stroke-width="1.35" fill="none"/><path d="M3.3 3H6.7" stroke="#1c1c1c" stroke-width="1.25"/></g></svg>
<span id="t48" class="t f-s" style="left:308.4px;top:257.5px;font-size:7.4px;color:#222222;letter-spacing:-0.315px;">8–9</span>
<svg style="left:347px;top:253px;width:10px;height:9px" viewBox="0 0 10 9"><g transform="translate(0.2 0.4)"><defs><linearGradient id="bu9" x1="0.2" y1="0" x2="0.8" y2="1"><stop offset="0.15" stop-color="#f4f8ff"/><stop offset="1" stop-color="#a9c3f0"/></linearGradient></defs><path d="M1.7 0.5H7.3Q8.5 0.5 8.5 1.7V4.6Q8.5 5.8 7.3 5.8H4.2L2 8V5.8H1.7Q0.5 5.8 0.5 4.6V1.7Q0.5 0.5 1.7 0.5Z" fill="url(#bu9)" stroke="#5c85d2" stroke-width="0.7" stroke-linejoin="round"/><path d="M2.4 2.2H6.6M2.4 3.2H6.6M2.4 4.2H5" stroke="#4f7bd0" stroke-width="0.5" opacity="0.8"/></g></svg>
<span id="t49" class="t f-s" style="left:362px;top:257.5px;font-size:7.3px;color:#2f4d7e;letter-spacing:-0.252px;">Praktische und technische Zwecke der Wissenschaft</span>
<svg style="left:617px;top:254px;width:11px;height:7px" viewBox="0 0 11 7"><g transform="translate(0.4 0.5)"><path d="M4.3 1.05H2.75A1.95 1.95 0 0 0 2.75 4.95H4.3M5.7 1.05H7.25A1.95 1.95 0 0 1 7.25 4.95H5.7" stroke="#1c1c1c" stroke-width="1.35" fill="none"/><path d="M3.3 3H6.7" stroke="#1c1c1c" stroke-width="1.25"/></g></svg>
<span id="t50" class="t f-s" style="left:308.4px;top:274.8px;font-size:7.4px;color:#222222;letter-spacing:-0.125px;">9</span>
<svg style="left:347px;top:270px;width:10px;height:10px" viewBox="0 0 10 10"><g transform="translate(0.2 0.7)"><defs><linearGradient id="bu10" x1="0.2" y1="0" x2="0.8" y2="1"><stop offset="0.15" stop-color="#f4f8ff"/><stop offset="1" stop-color="#a9c3f0"/></linearGradient></defs><path d="M1.7 0.5H7.3Q8.5 0.5 8.5 1.7V4.6Q8.5 5.8 7.3 5.8H4.2L2 8V5.8H1.7Q0.5 5.8 0.5 4.6V1.7Q0.5 0.5 1.7 0.5Z" fill="url(#bu10)" stroke="#5c85d2" stroke-width="0.7" stroke-linejoin="round"/><path d="M2.4 2.2H6.6M2.4 3.2H6.6M2.4 4.2H5" stroke="#4f7bd0" stroke-width="0.5" opacity="0.8"/></g></svg>
<span id="t51" class="t f-s" style="left:362px;top:274.8px;font-size:7.3px;color:#2f4d7e;letter-spacing:-0.276px;">Wissenschaft als zentraler Teil des historischen</span>
<span id="t52" class="t f-s" style="left:362px;top:284.7px;font-size:7.3px;color:#2f4d7e;letter-spacing:-0.288px;">Intellektualisierungsprozesses</span>
<svg style="left:617px;top:271px;width:11px;height:7px" viewBox="0 0 11 7"><g transform="translate(0.4 0.5)"><path d="M4.3 1.05H2.75A1.95 1.95 0 0 0 2.75 4.95H4.3M5.7 1.05H7.25A1.95 1.95 0 0 1 7.25 4.95H5.7" stroke="#1c1c1c" stroke-width="1.35" fill="none"/><path d="M3.3 3H6.7" stroke="#1c1c1c" stroke-width="1.25"/></g></svg>
<span id="t53" class="t f-s" style="left:308.4px;top:299.6px;font-size:7.4px;color:#222222;letter-spacing:-0.125px;">9</span>
<svg style="left:347px;top:295px;width:10px;height:10px" viewBox="0 0 10 10"><g transform="translate(0.2 0.5)"><defs><linearGradient id="bu11" x1="0.2" y1="0" x2="0.8" y2="1"><stop offset="0.15" stop-color="#fbe3f8"/><stop offset="1" stop-color="#e393db"/></linearGradient></defs><path d="M1.7 0.5H7.3Q8.5 0.5 8.5 1.7V4.6Q8.5 5.8 7.3 5.8H4.2L2 8V5.8H1.7Q0.5 5.8 0.5 4.6V1.7Q0.5 0.5 1.7 0.5Z" fill="url(#bu11)" stroke="#b85cb0" stroke-width="0.7" stroke-linejoin="round"/><path d="M2.4 2.2H6.6M2.4 3.2H6.6M2.4 4.2H5" stroke="#a9409f" stroke-width="0.5" opacity="0.8"/></g></svg>
<span id="t54" class="t f-s" style="left:362px;top:299.6px;font-size:7.3px;color:#2f4d7e;letter-spacing:-0.189px;">Die zunehmende Intellektualisierung und Rationalisierung führt zur</span>
<span id="t55" class="t f-s" style="left:362px;top:309.5px;font-size:7.3px;color:#2f4d7e;letter-spacing:-0.139px;">"Entzauberung der Welt"</span>
<svg style="left:617px;top:296px;width:11px;height:7px" viewBox="0 0 11 7"><g transform="translate(0.4 0.5)"><path d="M4.3 1.05H2.75A1.95 1.95 0 0 0 2.75 4.95H4.3M5.7 1.05H7.25A1.95 1.95 0 0 1 7.25 4.95H5.7" stroke="#1c1c1c" stroke-width="1.35" fill="none"/><path d="M3.3 3H6.7" stroke="#1c1c1c" stroke-width="1.25"/></g></svg>
<span id="t56" class="t f-s" style="left:308.4px;top:324.8px;font-size:7.4px;color:#222222;letter-spacing:-0.217px;">10</span>
<svg style="left:347px;top:320px;width:10px;height:10px" viewBox="0 0 10 10"><g transform="translate(0.2 0.7)"><defs><linearGradient id="bu12" x1="0.2" y1="0" x2="0.8" y2="1"><stop offset="0.15" stop-color="#f4f8ff"/><stop offset="1" stop-color="#a9c3f0"/></linearGradient></defs><path d="M1.7 0.5H7.3Q8.5 0.5 8.5 1.7V4.6Q8.5 5.8 7.3 5.8H4.2L2 8V5.8H1.7Q0.5 5.8 0.5 4.6V1.7Q0.5 0.5 1.7 0.5Z" fill="url(#bu12)" stroke="#5c85d2" stroke-width="0.7" stroke-linejoin="round"/><path d="M2.4 2.2H6.6M2.4 3.2H6.6M2.4 4.2H5" stroke="#4f7bd0" stroke-width="0.5" opacity="0.8"/></g></svg>
<span id="t57" class="t f-s" style="left:362px;top:324.8px;font-size:7.3px;color:#2f4d7e;letter-spacing:-0.265px;">Die Frage nach dem Sinn wissenschaftlicher Arbeit</span>
<svg style="left:617px;top:321px;width:11px;height:7px" viewBox="0 0 11 7"><g transform="translate(0.4 0.5)"><path d="M4.3 1.05H2.75A1.95 1.95 0 0 0 2.75 4.95H4.3M5.7 1.05H7.25A1.95 1.95 0 0 1 7.25 4.95H5.7" stroke="#1c1c1c" stroke-width="1.35" fill="none"/><path d="M3.3 3H6.7" stroke="#1c1c1c" stroke-width="1.25"/></g></svg>
<span id="t58" class="t f-s" style="left:308.4px;top:341.9px;font-size:7.4px;color:#222222;letter-spacing:-0.352px;">10–13</span>
<svg style="left:347px;top:337px;width:10px;height:10px" viewBox="0 0 10 10"><g transform="translate(0.2 0.8)"><defs><linearGradient id="bu13" x1="0.2" y1="0" x2="0.8" y2="1"><stop offset="0.15" stop-color="#d2f4b2"/><stop offset="1" stop-color="#5aba3a"/></linearGradient></defs><path d="M1.7 0.5H7.3Q8.5 0.5 8.5 1.7V4.6Q8.5 5.8 7.3 5.8H4.2L2 8V5.8H1.7Q0.5 5.8 0.5 4.6V1.7Q0.5 0.5 1.7 0.5Z" fill="url(#bu13)" stroke="#2f8f22" stroke-width="0.7" stroke-linejoin="round"/><path d="M3.1 2.2Q4.6 1 5.6 2.1Q6 3 4.6 3.4V4M4.6 4.6V5" stroke="#ffffff" stroke-width="0.85" fill="none"/></g></svg>
<span id="t59" class="t f-s" style="left:362px;top:341.9px;font-size:7.3px;color:#2f4d7e;letter-spacing:-0.251px;">Illusionen über den Sinn der Wissenschaft</span>
<svg style="left:617px;top:338px;width:11px;height:7px" viewBox="0 0 11 7"><g transform="translate(0.4 0.5)"><path d="M4.3 1.05H2.75A1.95 1.95 0 0 0 2.75 4.95H4.3M5.7 1.05H7.25A1.95 1.95 0 0 1 7.25 4.95H5.7" stroke="#1c1c1c" stroke-width="1.35" fill="none"/><path d="M3.3 3H6.7" stroke="#1c1c1c" stroke-width="1.25"/></g></svg>
<span id="t60" class="t f-s" style="left:308.4px;top:359.0px;font-size:7.4px;color:#222222;letter-spacing:-0.217px;">13</span>
<svg style="left:347px;top:354px;width:10px;height:10px" viewBox="0 0 10 10"><g transform="translate(0.2 0.9)"><defs><linearGradient id="bu14" x1="0.2" y1="0" x2="0.8" y2="1"><stop offset="0.15" stop-color="#fbe3f8"/><stop offset="1" stop-color="#e393db"/></linearGradient></defs><path d="M1.7 0.5H7.3Q8.5 0.5 8.5 1.7V4.6Q8.5 5.8 7.3 5.8H4.2L2 8V5.8H1.7Q0.5 5.8 0.5 4.6V1.7Q0.5 0.5 1.7 0.5Z" fill="url(#bu14)" stroke="#b85cb0" stroke-width="0.7" stroke-linejoin="round"/><path d="M2.4 2.2H6.6M2.4 3.2H6.6M2.4 4.2H5" stroke="#a9409f" stroke-width="0.5" opacity="0.8"/></g></svg>
<span id="t61" class="t f-s" style="left:362px;top:359.0px;font-size:7.3px;color:#2f4d7e;letter-spacing:-0.313px;">Was kann Wissenschaft leisten?</span>
<svg style="left:617px;top:355px;width:11px;height:7px" viewBox="0 0 11 7"><g transform="translate(0.4 0.5)"><path d="M4.3 1.05H2.75A1.95 1.95 0 0 0 2.75 4.95H4.3M5.7 1.05H7.25A1.95 1.95 0 0 1 7.25 4.95H5.7" stroke="#1c1c1c" stroke-width="1.35" fill="none"/><path d="M3.3 3H6.7" stroke="#1c1c1c" stroke-width="1.25"/></g></svg>
<span id="t62" class="t f-s" style="left:308.4px;top:376.1px;font-size:7.4px;color:#222222;letter-spacing:-0.217px;">13</span>
<svg style="left:347px;top:372px;width:10px;height:9px" viewBox="0 0 10 9"><g transform="translate(0.2 0.0)"><defs><linearGradient id="bu15" x1="0.2" y1="0" x2="0.8" y2="1"><stop offset="0.15" stop-color="#f4f8ff"/><stop offset="1" stop-color="#a9c3f0"/></linearGradient></defs><path d="M1.7 0.5H7.3Q8.5 0.5 8.5 1.7V4.6Q8.5 5.8 7.3 5.8H4.2L2 8V5.8H1.7Q0.5 5.8 0.5 4.6V1.7Q0.5 0.5 1.7 0.5Z" fill="url(#bu15)" stroke="#5c85d2" stroke-width="0.7" stroke-linejoin="round"/><path d="M2.4 2.2H6.6M2.4 3.2H6.6M2.4 4.2H5" stroke="#4f7bd0" stroke-width="0.5" opacity="0.8"/></g></svg>
<span id="t63" class="t f-s" style="left:362px;top:376.1px;font-size:7.3px;color:#2f4d7e;letter-spacing:-0.202px;">Voraussetzung wissenschaftlicher Arbeit ist etwas wissenschaftlich nicht</span>
<span id="t64" class="t f-s" style="left:362px;top:386.0px;font-size:7.3px;color:#2f4d7e;letter-spacing:-0.177px;">Beweisbares:  ihre Wichtigkeit</span>
<svg style="left:617px;top:372px;width:11px;height:7px" viewBox="0 0 11 7"><g transform="translate(0.4 0.5)"><path d="M4.3 1.05H2.75A1.95 1.95 0 0 0 2.75 4.95H4.3M5.7 1.05H7.25A1.95 1.95 0 0 1 7.25 4.95H5.7" stroke="#1c1c1c" stroke-width="1.35" fill="none"/><path d="M3.3 3H6.7" stroke="#1c1c1c" stroke-width="1.25"/></g></svg>
<span id="t65" class="t f-s" style="left:308.4px;top:401.3px;font-size:7.4px;color:#222222;letter-spacing:-0.352px;">13–14</span>
<svg style="left:347px;top:397px;width:10px;height:9px" viewBox="0 0 10 9"><g transform="translate(0.2 0.2)"><defs><linearGradient id="bu16" x1="0.2" y1="0" x2="0.8" y2="1"><stop offset="0.15" stop-color="#d2f4b2"/><stop offset="1" stop-color="#5aba3a"/></linearGradient></defs><path d="M1.7 0.5H7.3Q8.5 0.5 8.5 1.7V4.6Q8.5 5.8 7.3 5.8H4.2L2 8V5.8H1.7Q0.5 5.8 0.5 4.6V1.7Q0.5 0.5 1.7 0.5Z" fill="url(#bu16)" stroke="#2f8f22" stroke-width="0.7" stroke-linejoin="round"/><path d="M3.1 2.2Q4.6 1 5.6 2.1Q6 3 4.6 3.4V4M4.6 4.6V5" stroke="#ffffff" stroke-width="0.85" fill="none"/></g></svg>
<span id="t66" class="t f-s" style="left:362px;top:401.3px;font-size:7.3px;color:#2f4d7e;letter-spacing:-0.224px;">Wissenschaft ist nicht per se sinnvoll</span>
<svg style="left:617px;top:397px;width:11px;height:7px" viewBox="0 0 11 7"><g transform="translate(0.4 0.5)"><path d="M4.3 1.05H2.75A1.95 1.95 0 0 0 2.75 4.95H4.3M5.7 1.05H7.25A1.95 1.95 0 0 1 7.25 4.95H5.7" stroke="#1c1c1c" stroke-width="1.35" fill="none"/><path d="M3.3 3H6.7" stroke="#1c1c1c" stroke-width="1.25"/></g></svg>
<span id="t67" class="t f-s" style="left:-1.5px;top:111.2px;font-size:7.0px;color:#505560;letter-spacing:-0.950px;">R.</span>
<span id="t68" class="t f-s" style="left:-2.2px;top:122.2px;font-size:7.3px;color:#1c1c1c;font-weight:700;letter-spacing:-0.028px;">urriculum</span>
<span id="t69" class="t f-s" style="left:-1.2px;top:158.8px;font-size:7.3px;color:#1c1c1c;font-weight:700;letter-spacing:-0.309px;">ies through Institutional Assessments</span>
<span id="t70" class="t f-s" style="left:-1.6px;top:269.2px;font-size:7.3px;color:#1c1c1c;font-weight:700;letter-spacing:-0.222px;">s through Mapping and Integrating Information Literacy into Curriculum</span>
<span id="t71" class="t f-s" style="left:-1.2px;top:296.0px;font-size:7.0px;color:#505560;letter-spacing:-0.075px;">Penny; Rothschild, Michal; Kotzki, Shulamit; Uziel, Yosef</span>
<span id="t72" class="t f-s" style="left:-1.8px;top:306.8px;font-size:7.3px;color:#1c1c1c;font-weight:700;letter-spacing:-0.223px;">dation during intra-articular corticosteroid injection for juvenile idiopathic arthritis</span>
<span id="t73" class="t f-s" style="left:2px;top:343.2px;font-size:7.3px;color:#1c1c1c;font-weight:700;letter-spacing:-0.292px;">at university</span>
<span id="t74" class="t f-s" style="left:-0.6px;top:380.0px;font-size:7.3px;color:#1c1c1c;font-weight:700;letter-spacing:-0.234px;">rth age: Implications for the conceptualization of information literacy</span>
<span id="t75" class="t f-s" style="left:-1.2px;top:416.8px;font-size:7.3px;color:#1c1c1c;font-weight:700;letter-spacing:-0.173px;">rmation Literacy from the Millennial Mind</span>
<span id="t76" class="t f-s" style="left:-1.0px;top:443.2px;font-size:7.0px;color:#505560;letter-spacing:-0.064px;">is; Gruber, Alejandro; Tavor, Oren; Haviv, Eli; Glatstein, Miguel</span>
<span id="t77" class="t f-s" style="left:-1.4px;top:454.0px;font-size:7.3px;color:#1c1c1c;font-weight:700;letter-spacing:-0.299px;">ing intravenous access in the pediatric emergency department: a randomized prospectiv</span>
<span id="t78" class="t f-s" style="left:-1.4px;top:480.2px;font-size:7.0px;color:#505560;letter-spacing:-0.111px;">abi, Afsaneh</span>
<span id="t79" class="t f-s" style="left:-1.6px;top:491.0px;font-size:7.3px;color:#1c1c1c;font-weight:700;letter-spacing:-0.278px;">evement of Central Library Users' Information Literacy (a Case Study: Iran)</span>
<span id="t80" class="t f-s" style="left:-1.4px;top:517.0px;font-size:7.0px;color:#505560;letter-spacing:-1.306px;">a</span>
<span id="t81" class="t f-s" style="left:-1.2px;top:527.8px;font-size:7.3px;color:#1c1c1c;font-weight:700;letter-spacing:-0.281px;">rvention on the Reduction of Postoperative Anxiety and Pain Among Preschool Childre</span>
<span id="t82" class="t f-s" style="left:-1.2px;top:565.0px;font-size:7.3px;color:#1c1c1c;font-weight:700;letter-spacing:-0.290px;">rriculares. Criterios de análisis de materiales que utilizan el papel como soporte</span>
<div style="left:709px;top:105px;width:91px;height:7px;background:#d8e5f9;box-shadow:0 0 0.9px #d8e5f9;"></div>
<span id="t83" class="t f-r pd" style="left:709.4px;top:109.0px;font-size:5.35px;color:#262626;word-spacing:0.4px;">hat sich jeder abzufinden, der der Wissenschaft dienen will. Wissenschaftliche</span>
<span id="t84" class="t f-r pd" style="left:709.4px;top:115.47px;font-size:5.35px;color:#262626;word-spacing:0.4px;">Arbeiten können gewiß dauernd, als „Genußmittel“, ihrer künstlerischen Quali-</span>
<span id="t85" class="t f-r pd" style="left:709.4px;top:121.94px;font-size:5.35px;color:#262626;word-spacing:0.4px;">tät wegen, oder als Mittel der Schulung zur Arbeit, wichtig bleiben. Wissen-</span>
<span id="t86" class="t f-r pd" style="left:709.4px;top:128.41px;font-size:5.35px;color:#262626;word-spacing:0.4px;">schaftlich aber überholt zu werden, ist – es sei wiederholt – nicht nur unser aller</span>
<span id="t87" class="t f-r pd" style="left:709.4px;top:134.88px;font-size:5.35px;color:#262626;word-spacing:0.4px;">Schicksal, sondern unser aller Zweck. Wir können nicht arbeiten, ohne zu</span>
<span id="t88" class="t f-r pd" style="left:709.4px;top:141.35px;font-size:5.35px;color:#262626;word-spacing:0.4px;">hoffen, daß andere weiter kommen werden als wir. Prinzipiell geht dieser</span>
<div style="left:709px;top:143px;width:91px;height:7px;background:#fbfcae;box-shadow:0 0 0.9px #fbfcae;"></div>
<span id="t89" class="t f-r pd" style="left:709.4px;top:147.82px;font-size:5.35px;color:#262626;word-spacing:0.4px;">Fortschritt in das Unendliche. Und damit kommen wir zu dem Sinnproblem der</span>
<div style="left:709px;top:150px;width:29px;height:7px;background:#fbfcae;box-shadow:0 0 0.9px #fbfcae;"></div>
<span id="t90" class="t f-r pd" style="left:709.4px;top:154.29px;font-size:5.35px;color:#262626;word-spacing:0.4px;">Wissenschaft. Denn das versteht sich ja doch nicht so von selbst, daß etwas,</span>
<span id="t91" class="t f-r pd" style="left:709.4px;top:160.76px;font-size:5.35px;color:#262626;word-spacing:0.4px;">das einem solchen Gesetz unterstellt ist, Sinn und Verstand in sich selbst hat.</span>
<div style="left:709px;top:163px;width:91px;height:7px;background:#d8e5f9;box-shadow:0 0 0.9px #d8e5f9;"></div>
<span id="t92" class="t f-r pd" style="left:709.4px;top:167.23px;font-size:5.35px;color:#262626;word-spacing:0.4px;">Warum betreibt man etwas, das in der Wirklichkeit nie zu Ende kommt und</span>
<span id="t93" class="t f-r" style="left:789.4px;top:219.4px;font-size:5.35px;color:#262626;">· 9 ·</span>
<div style="left:709px;top:228px;width:91px;height:7px;background:#d8e5f9;box-shadow:0 0 0.9px #d8e5f9;"></div>
<span id="t94" class="t f-r pd" style="left:709.4px;top:232.8px;font-size:5.35px;color:#262626;word-spacing:0.4px;">kommen kann? Nun zunächst: zu rein praktischen, im weiteren Wortsinn:</span>
<div style="left:709px;top:235px;width:47px;height:7px;background:#d8e5f9;box-shadow:0 0 0.9px #d8e5f9;"></div>
<span id="t95" class="t f-r pd" style="left:709.4px;top:239.30800000000002px;font-size:5.35px;color:#262626;word-spacing:0.4px;">technischen Zwecken: um unser praktisches Handeln an den Erwartungen</span>
<span id="t96" class="t f-r pd" style="left:709.4px;top:245.816px;font-size:5.35px;color:#262626;word-spacing:0.4px;">orientieren zu können, welche die wissenschaftliche Erfahrung uns an die Hand</span>
<span id="t97" class="t f-r pd" style="left:709.4px;top:252.324px;font-size:5.35px;color:#262626;word-spacing:0.4px;">gibt. Gut. Aber das bedeutet nur etwas für den Praktiker. Welches aber ist die</span>
<span id="t98" class="t f-r pd" style="left:709.4px;top:258.832px;font-size:5.35px;color:#262626;word-spacing:0.4px;">innere Stellung des Mannes der Wissenschaft selbst zu seinem Beruf? – wenn</span>
<span id="t99" class="t f-r pd" style="left:709.4px;top:265.34000000000003px;font-size:5.35px;color:#262626;word-spacing:0.4px;">er nämlich nach einer solchen überhaupt sucht. Er behauptet: die Wissenschaft</span>
<span id="t100" class="t f-r pd" style="left:709.4px;top:271.848px;font-size:5.35px;color:#262626;word-spacing:0.4px;">„um ihrer selbst willen“ und nicht nur dazu zu betreiben, weil andere damit</span>
<span id="t101" class="t f-r pd" style="left:709.4px;top:278.356px;font-size:5.35px;color:#262626;word-spacing:0.4px;">geschäftliche oder technische Erfolge herbeiführen, sich besser nähren, kleiden,</span>
<span id="t102" class="t f-r pd" style="left:709.4px;top:284.86400000000003px;font-size:5.35px;color:#262626;word-spacing:0.4px;">beleuchten, regieren können. Was glaubt er denn aber Sinnvolles damit, mit</span>
<span id="t103" class="t f-r pd" style="left:709.4px;top:291.372px;font-size:5.35px;color:#262626;word-spacing:0.4px;">diesen stets zum Veralten bestimmten Schöpfungen, zu leisten, damit also, daß</span>
<span id="t104" class="t f-r pd" style="left:709.4px;top:297.88px;font-size:5.35px;color:#262626;word-spacing:0.4px;">er sich in diesen fachgeteilten, ins Unendliche laufenden Betrieb einspannen</span>
<div style="left:750px;top:300px;width:50px;height:7px;background:#fbfcae;box-shadow:0 0 0.9px #fbfcae;"></div>
<span id="t105" class="t f-r pd" style="left:709.4px;top:304.38800000000003px;font-size:5.35px;color:#262626;word-spacing:0.4px;">läßt? Das erfordert einige allgemeine Erwägungen.</span>
<div style="left:718px;top:306px;width:82px;height:7px;background:#d8e5f9;box-shadow:0 0 0.9px #d8e5f9;"></div>
<span id="t106" class="t f-r pd" style="left:718.2px;top:310.896px;font-size:5.35px;color:#262626;word-spacing:0.4px;">Der wissenschaftliche Fortschritt ist ein Bruchteil, und zwar der wichtigste</span>
<div style="left:709px;top:313px;width:91px;height:7px;background:#d8e5f9;box-shadow:0 0 0.9px #d8e5f9;"></div>
<span id="t107" class="t f-r pd" style="left:709.4px;top:317.404px;font-size:5.35px;color:#262626;word-spacing:0.4px;">Bruchteil, jenes Intellektualisierungsprozesses, dem wir seit Jahrtausenden</span>
<div style="left:709px;top:320px;width:24px;height:7px;background:#d8e5f9;box-shadow:0 0 0.9px #d8e5f9;"></div>
<span id="t108" class="t f-r pd" style="left:709.4px;top:323.91200000000003px;font-size:5.35px;color:#262626;word-spacing:0.4px;">unterliegen, und zu dem heute üblicherweise in so außerordentlich negativer</span>
<span id="t109" class="t f-r pd" style="left:709.4px;top:330.42px;font-size:5.35px;color:#262626;word-spacing:0.4px;">Art Stellung genommen wird.</span>
<div style="left:718px;top:333px;width:82px;height:7px;background:#fbfcae;box-shadow:0 0 0.9px #fbfcae;"></div>
<span id="t110" class="t f-r pd" style="left:718.2px;top:336.928px;font-size:5.35px;color:#262626;word-spacing:0.4px;">Machen wir uns zunächst klar, was denn eigentlich diese intellektua-</span>
<div style="left:709px;top:339px;width:91px;height:7px;background:#fbfcae;box-shadow:0 0 0.9px #fbfcae;"></div>
<span id="t111" class="t f-r pd" style="left:709.4px;top:343.43600000000004px;font-size:5.35px;color:#262626;word-spacing:0.4px;">listische Rationalisierung durch Wissenschaft und wissenschaftlich orientierte</span>
<div style="left:709px;top:346px;width:58px;height:7px;background:#fbfcae;box-shadow:0 0 0.9px #fbfcae;"></div>
<span id="t112" class="t f-r pd" style="left:709.4px;top:349.944px;font-size:5.35px;color:#262626;word-spacing:0.4px;">Technik praktisch bedeutet. Etwa, daß wir heute, jeder z. B., der hier im Saale</span>
<span id="t113" class="t f-r pd" style="left:709.4px;top:356.452px;font-size:5.35px;color:#262626;word-spacing:0.4px;">sitzt, eine größere Kenntnis der Lebensbedingungen hat, unter denen er exis-</span>
<span id="t114" class="t f-r pd" style="left:709.4px;top:362.96000000000004px;font-size:5.35px;color:#262626;word-spacing:0.4px;">tiert, als ein Indianer oder ein Hottentotte? Schwerlich. Wer von uns auf der</span>
<span id="t115" class="t f-r pd" style="left:709.4px;top:369.468px;font-size:5.35px;color:#262626;word-spacing:0.4px;">Straßenbahn fährt, hat – wenn er nicht Fachphysiker ist – keine Ahnung, wie sie</span>
<span id="t116" class="t f-r pd" style="left:709.4px;top:375.976px;font-size:5.35px;color:#262626;word-spacing:0.4px;">das macht, sich in Bewegung zu setzen. Er braucht auch nichts davon zu wis-</span>
<span id="t117" class="t f-r pd" style="left:709.4px;top:382.48400000000004px;font-size:5.35px;color:#262626;word-spacing:0.4px;">sen. Es genügt ihm, daß er auf das Verhalten des Straßenbahnwagens „rechnen“</span>
<span id="t118" class="t f-r pd" style="left:709.4px;top:388.992px;font-size:5.35px;color:#262626;word-spacing:0.4px;">kann, er orientiert sein Verhalten daran; aber wie man eine Trambahn so her-</span>
<span id="t119" class="t f-r pd" style="left:709.4px;top:395.5px;font-size:5.35px;color:#262626;word-spacing:0.4px;">stellt, daß sie sich bewegt, davon weiß er nichts. Der Wilde weiß das von seinen</span>
<span id="t120" class="t f-r pd" style="left:709.4px;top:402.00800000000004px;font-size:5.35px;color:#262626;word-spacing:0.4px;">Werkzeugen ungleich besser. Wenn wir heute Geld ausgeben, so wette ich, daß,</span>
<span id="t121" class="t f-r pd" style="left:709.4px;top:408.516px;font-size:5.35px;color:#262626;word-spacing:0.4px;">sogar wenn nationalökonomische Fachkollegen im Saale sind, fast jeder eine</span>
<span id="t122" class="t f-r pd" style="left:709.4px;top:415.024px;font-size:5.35px;color:#262626;word-spacing:0.4px;">andere Antwort bereit halten wird auf die Frage: Wie macht das Geld es, daß</span>
<span id="t123" class="t f-r pd" style="left:709.4px;top:421.53200000000004px;font-size:5.35px;color:#262626;word-spacing:0.4px;">man dafür etwas – bald viel, bald wenig – kaufen kann? Wie der Wilde es</span>
<span id="t124" class="t f-r pd" style="left:709.4px;top:428.04px;font-size:5.35px;color:#262626;word-spacing:0.4px;">macht, um zu seiner täglichen Nahrung zu kommen, und welche Institutionen</span>
<div style="left:776px;top:430px;width:24px;height:7px;background:#fbfcae;box-shadow:0 0 0.9px #fbfcae;"></div>
<span id="t125" class="t f-r pd" style="left:709.4px;top:434.548px;font-size:5.35px;color:#262626;word-spacing:0.4px;">ihm dabei dienen, das weiß er. Die zunehmende Intellektualisierung und Ratio-</span>
<div style="left:709px;top:437px;width:91px;height:7px;background:#fbfcae;box-shadow:0 0 0.9px #fbfcae;"></div>
<span id="t126" class="t f-r pd" style="left:709.4px;top:441.05600000000004px;font-size:5.35px;color:#262626;word-spacing:0.4px;">nalisierung bedeutet also nicht eine zunehmende allgemeine Kenntnis der</span>
<div style="left:709px;top:443px;width:91px;height:7px;background:#fbfcae;box-shadow:0 0 0.9px #fbfcae;"></div>
<span id="t127" class="t f-r pd" style="left:709.4px;top:447.564px;font-size:5.35px;color:#262626;word-spacing:0.4px;">Lebensbedingungen, unter denen man steht. Sondern sie bedeutet etwas ande-</span>
<div style="left:709px;top:450px;width:91px;height:7px;background:#fbfcae;box-shadow:0 0 0.9px #fbfcae;"></div>
<span id="t128" class="t f-r pd" style="left:709.4px;top:454.072px;font-size:5.35px;color:#262626;word-spacing:0.4px;">res: das Wissen davon oder den Glauben daran: daß man, wenn man nur wollte,</span>
<div style="left:709px;top:456px;width:91px;height:7px;background:#fbfcae;box-shadow:0 0 0.9px #fbfcae;"></div>
<span id="t129" class="t f-r pd" style="left:709.4px;top:460.58000000000004px;font-size:5.35px;color:#262626;word-spacing:0.4px;">es jederzeit erfahren könnte, daß es also prinzipiell keine geheimnisvollen</span>
<div style="left:709px;top:463px;width:91px;height:7px;background:#fbfcae;box-shadow:0 0 0.9px #fbfcae;"></div>
<span id="t130" class="t f-r pd" style="left:709.4px;top:467.088px;font-size:5.35px;color:#262626;word-spacing:0.4px;">unberechenbaren Mächte gebe, die da hineinspielen, daß man vielmehr alle</span>
<div style="left:709px;top:469px;width:91px;height:7px;background:#fbfcae;box-shadow:0 0 0.9px #fbfcae;"></div>
<span id="t131" class="t f-r pd" style="left:709.4px;top:473.596px;font-size:5.35px;color:#262626;word-spacing:0.4px;">Dinge – im Prinzip – durch Berechnen beherrschen könne. Das aber bedeutet:</span>
<div style="left:709px;top:476px;width:57px;height:7px;background:#fbfcae;box-shadow:0 0 0.9px #fbfcae;"></div>
<span id="t132" class="t f-r pd" style="left:709.4px;top:480.10400000000004px;font-size:5.35px;color:#262626;word-spacing:0.4px;">die Entzauberung der Welt. Nicht mehr, wie der Wilde, für den es solche Mäch-</span>
<span id="t133" class="t f-r pd" style="left:709.4px;top:486.612px;font-size:5.35px;color:#262626;word-spacing:0.4px;">te gab, muß man zu magischen Mitteln greifen, um die Geister zu beherrschen</span>
<span id="t134" class="t f-r pd" style="left:709.4px;top:493.12px;font-size:5.35px;color:#262626;word-spacing:0.4px;">oder zu erbitten. Sondern technische Mittel und Berechnung leisten das. Dies</span>
<span id="t135" class="t f-r pd" style="left:709.4px;top:499.628px;font-size:5.35px;color:#262626;word-spacing:0.4px;">vor allem bedeutet die Intellektualisierung als solche.</span>
<div style="left:718px;top:502px;width:82px;height:7px;background:#fbfcae;box-shadow:0 0 0.9px #fbfcae;"></div>
<span id="t136" class="t f-r pd" style="left:718.2px;top:506.136px;font-size:5.35px;color:#262626;word-spacing:0.4px;">Hat denn aber nun dieser in der okzidentalen Kultur durch Jahrtausende</span>
<div style="left:709px;top:508px;width:91px;height:7px;background:#fbfcae;box-shadow:0 0 0.9px #fbfcae;"></div>
<span id="t137" class="t f-r pd" style="left:709.4px;top:512.644px;font-size:5.35px;color:#262626;word-spacing:0.4px;">fortgesetzte Entzauberungsprozeß und überhaupt: dieser „Fortschritt“, dem</span>
</div></body></html>
